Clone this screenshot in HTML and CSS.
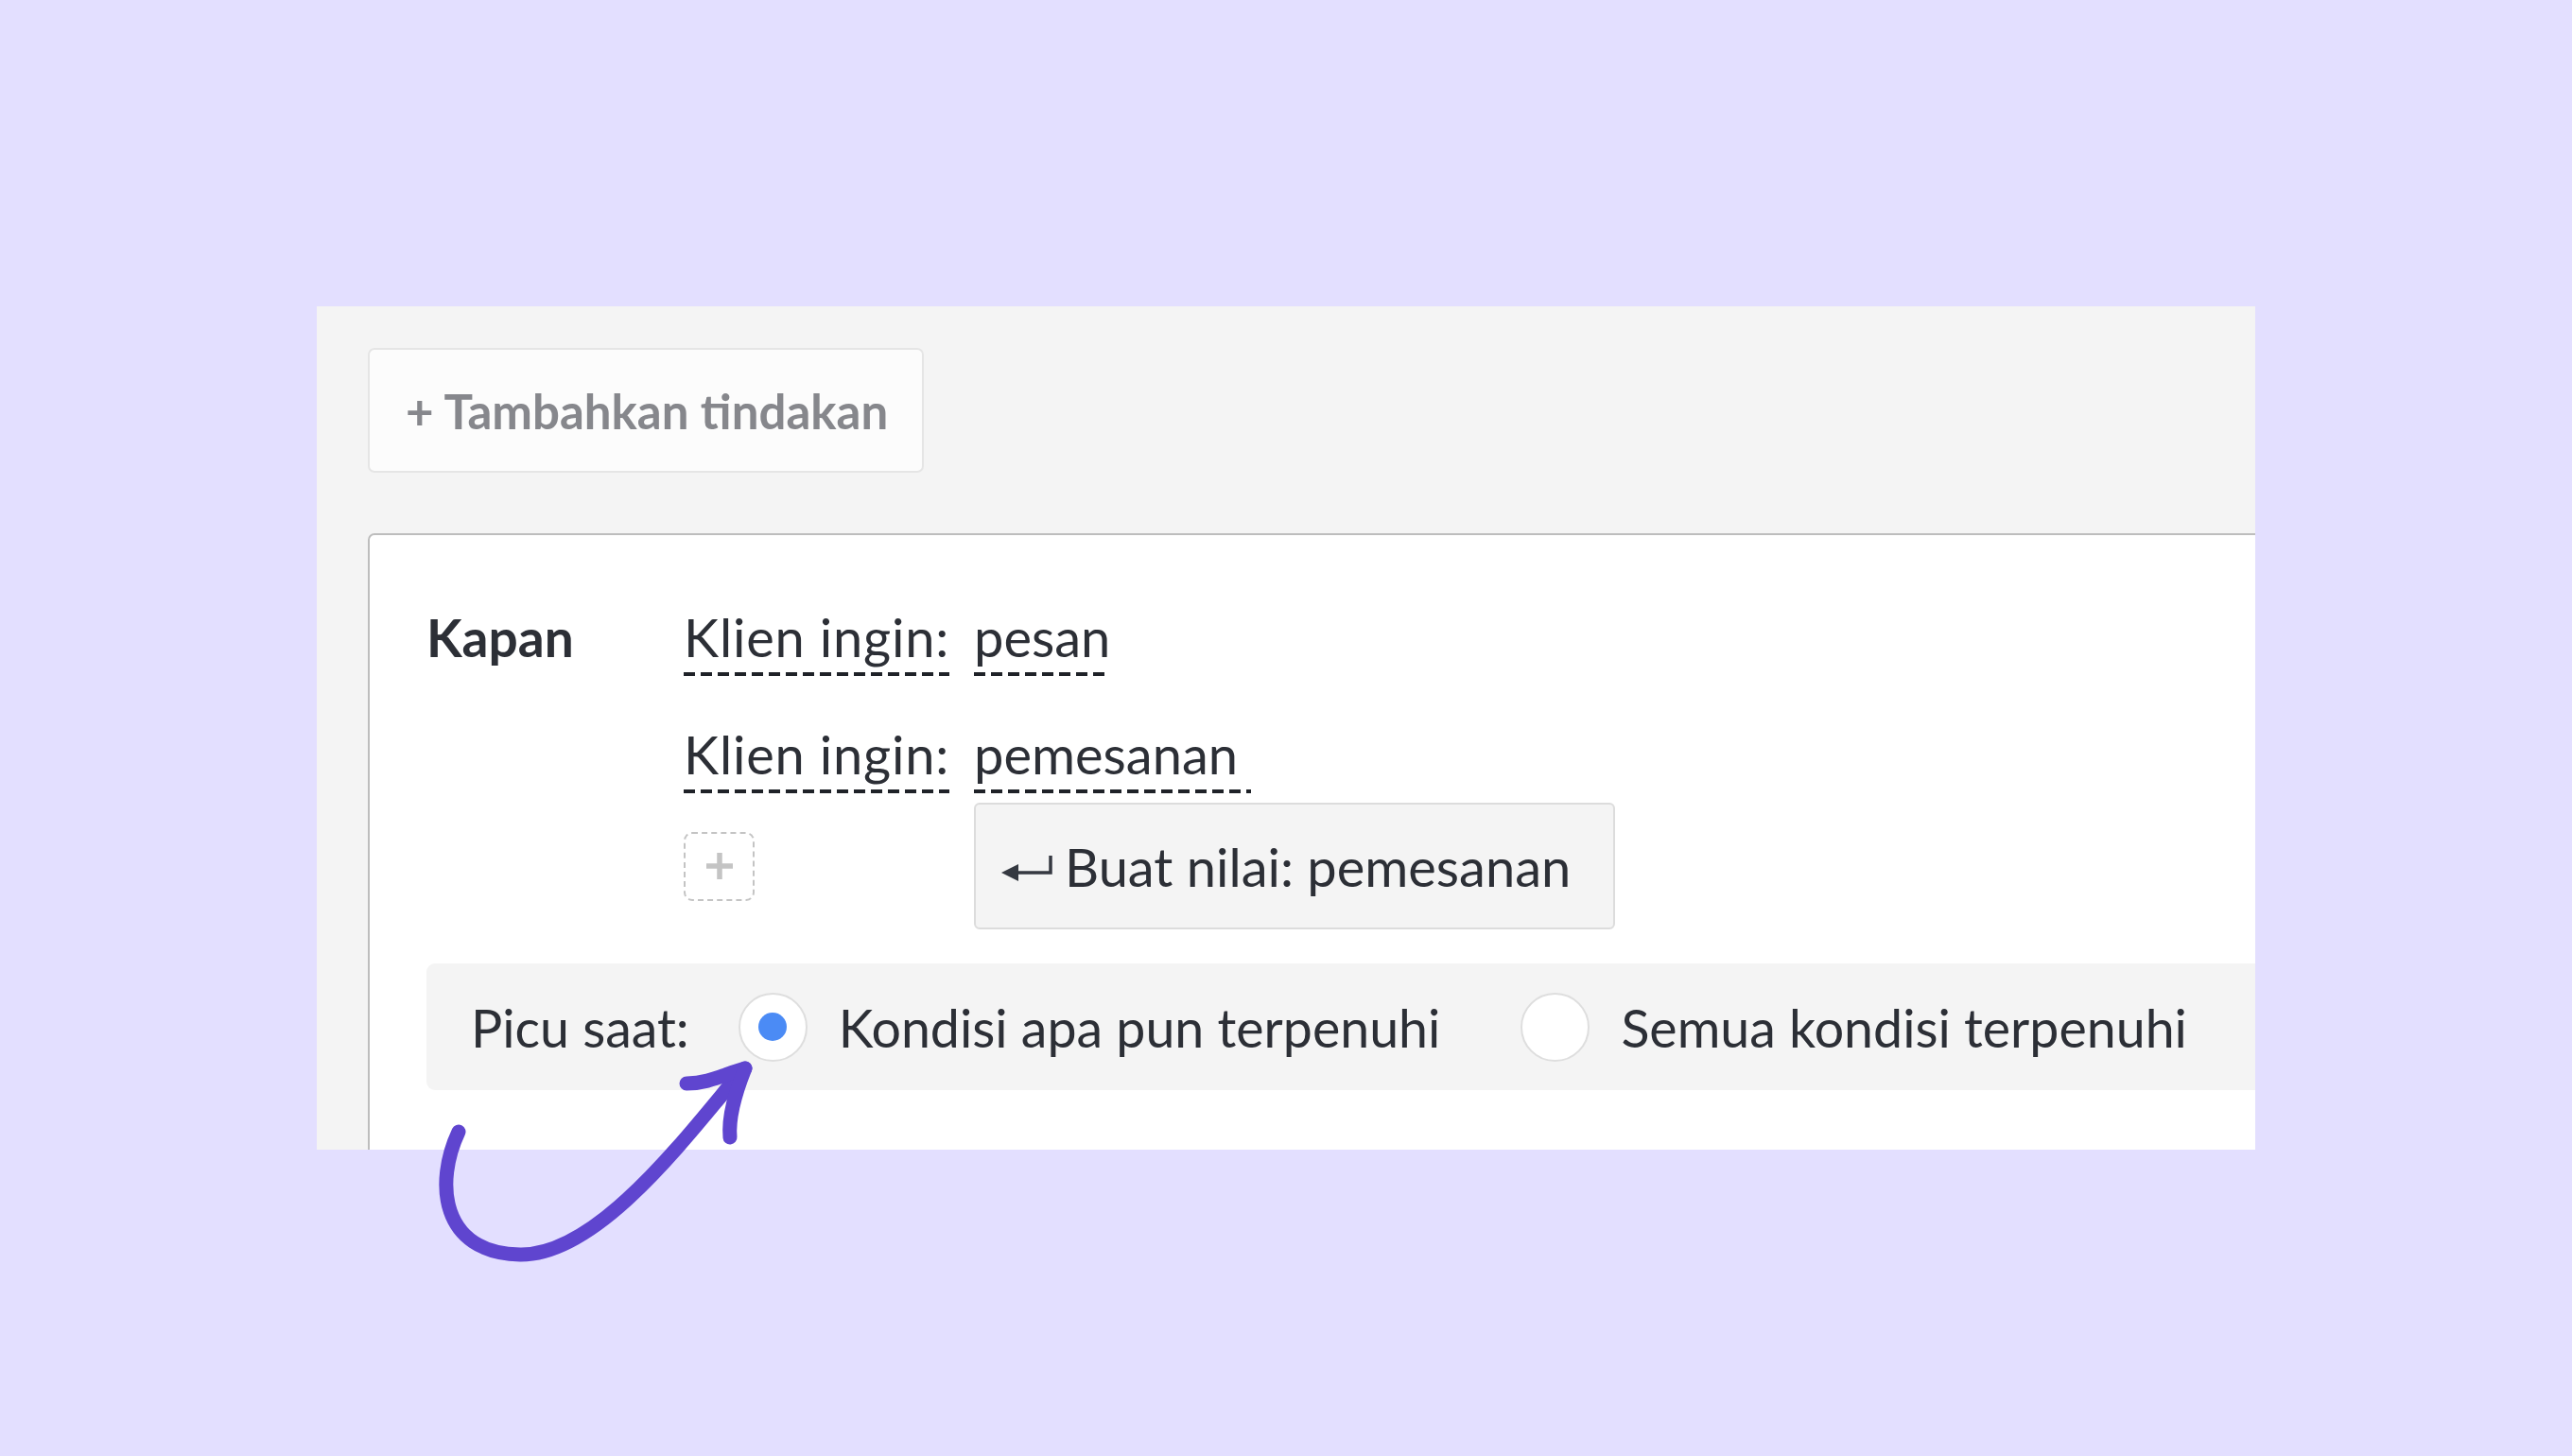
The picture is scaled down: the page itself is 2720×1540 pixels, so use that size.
FILE: index.html
```html
<!DOCTYPE html>
<html lang="id">
<head>
    <meta charset="UTF-8">
    <title>Aturan otomatis</title>
    <link rel="stylesheet" href="styles.css">
</head>
<body>
    <div class="panel">
        <button class="add-action">+ Tambahkan tindakan</button>

        <div class="rule-card">
            <div class="rule-when">
                <div class="rule-label">Kapan</div>
                <div class="conditions">
                    <span class="token token-key">Klien ingin:</span>
                    <span class="token">pesan</span>
                    <span class="token token-key">Klien ingin:</span>
                    <span class="token">pemesanan&nbsp;</span>
                    <!-- tambah kondisi + saran nilai baru -->
                    <span class="add-condition">
                        <svg width="32" height="32" viewBox="0 0 32 32"><path d="M16 2V30M2 16H30" stroke="#c4c4c4" stroke-width="5.5"/></svg>
                    </span>
                    <div class="suggestion">
                        <svg class="enter-icon" width="56" height="30" viewBox="0 0 56 30"><path d="M16 20H53V2" fill="none" stroke="#353941" stroke-width="3.5"/><path d="M1 20L19 11V29Z" fill="#353941"/></svg>
                        <span>Buat nilai: pemesanan</span>
                    </div>
                </div>
            </div>

            <div class="trigger-bar">
                <span class="trigger-title">Picu saat:</span>
                <label class="radio-option">
                    <span class="radio checked"></span>
                    Kondisi apa pun terpenuhi
                </label>
                <label class="radio-option">
                    <span class="radio"></span>
                    Semua kondisi terpenuhi
                </label>
            </div>
        </div>
    </div>

    <!-- panah petunjuk -->
    <svg class="hint-arrow" width="380" height="260" viewBox="0 0 380 260">
        <g fill="none" stroke="#5f45cf" stroke-width="15" stroke-linecap="round" stroke-linejoin="round">
            <path d="M45 97C20 150 25 225 110 227C190 228 280 110 340 38"/>
            <path d="M286 46C310 46 326 36 348 30"/>
            <path d="M348 30C338 55 330 80 332 103"/>
        </g>
    </svg>
</body>
</html>
```

FILE: styles.css
```css
html, body {
    margin: 0;
    height: 100%;
    overflow: hidden;
}
body {
    background: #e3dfff;
    font-family: "Lato", "Open Sans", sans-serif;
    color: #2c2f36;
    position: relative;
}
.panel {
    width: 2050px;
    height: 892px;
    margin: 324px 0 0 335px;
    padding: 44px 0 0 54px;
    box-sizing: border-box;
    background: #f4f4f4;
    overflow: hidden;
}
.add-action {
    display: block;
    height: 132px;
    width: 588px;
    padding: 0 0 0 38px;
    text-align: left;
    background: #fcfcfc;
    border: 2px solid #e5e5e5;
    border-radius: 7px;
    font-family: inherit;
    font-size: 51px;
    font-weight: 700;
    color: #86878c;
}
.rule-card {
    margin-top: 64px;
    margin-right: -400px;
    height: 900px;
    padding: 76px 0 0 60px;
    background: #fff;
    border: 2px solid #bdbdbd;
    border-radius: 7px 0 0 0;
}
.rule-when {
    display: flex;
    align-items: flex-start;
}
.rule-label {
    width: 272px;
    font-size: 55px;
    line-height: 64px;
    font-weight: 700;
}
.conditions {
    display: grid;
    grid-template-columns: auto auto;
    justify-content: start;
    justify-items: start;
    column-gap: 26px;
}
.token {
    font-size: 56px;
    line-height: 64px;
    padding-bottom: 9px;
    margin-bottom: 51px;
    white-space: nowrap;
    background: repeating-linear-gradient(to right, #1f2228 0 12px, transparent 12px 18px) left bottom / 100% 4px no-repeat;
}
.token-key {
    letter-spacing: 0.8px;
}
.conditions .token:nth-child(3),
.conditions .token:nth-child(4) {
    margin-bottom: 10px;
}
.add-condition {
    align-self: center;
    width: 75px;
    height: 73px;
    box-sizing: border-box;
    border: 2px dashed #c4c4c4;
    border-radius: 9px;
    display: flex;
    align-items: center;
    justify-content: center;
}
.suggestion {
    display: flex;
    align-items: center;
    gap: 12px;
    height: 134px;
    box-sizing: border-box;
    padding: 0 45px 0 26px;
    background: #f4f4f4;
    border: 2px solid #dcdcdc;
    border-radius: 6px;
    font-size: 56px;
}
.enter-icon {
    margin-top: 4px;
}
.trigger-bar {
    display: flex;
    align-items: center;
    height: 134px;
    margin-top: 36px;
    padding-left: 47px;
    background: #f4f4f4;
    border-radius: 9px 0 0 9px;
    font-size: 55.5px;
}
.trigger-title {
    margin-right: 52px;
}
.radio-option {
    display: flex;
    align-items: center;
    gap: 33px;
    margin-right: 85px;
}
.radio {
    width: 73px;
    height: 73px;
    box-sizing: border-box;
    border: 2px solid #dedede;
    border-radius: 50%;
    background: #fff;
    display: flex;
    align-items: center;
    justify-content: center;
}
.radio.checked::after {
    content: "";
    width: 30px;
    height: 30px;
    border-radius: 50%;
    background: #4b8bf5;
}
.hint-arrow {
    position: absolute;
    left: 440px;
    top: 1100px;
}
```
